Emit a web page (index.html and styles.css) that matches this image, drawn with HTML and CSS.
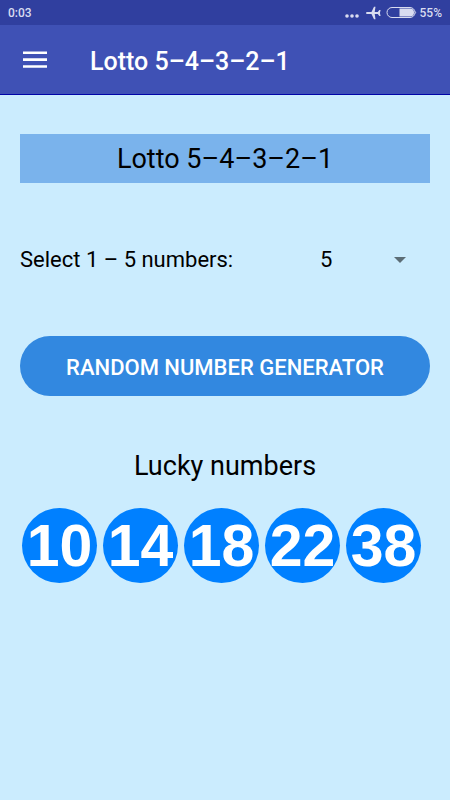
FILE: index.html
```html
<!DOCTYPE html>
<html lang="en">
<head>
<meta charset="utf-8">
<meta name="viewport" content="width=device-width, initial-scale=1">
<title>Lotto 5–4–3–2–1</title>
<link rel="stylesheet" href="styles.css">
</head>
<body>
<div class="status">
  <span class="clock">0:03</span>
  <svg class="dots" width="14" height="14" viewBox="0 0 14 14" aria-hidden="true"><circle cx="2" cy="10" r="1.8"/><circle cx="7" cy="10" r="1.8"/><circle cx="12" cy="10" r="1.8"/></svg>
  <svg class="plane" width="15" height="14" viewBox="0 0 15 14" aria-hidden="true"><path d="M0 7c0-.7.7-1 1.500-1H5.500L8 .7H9.500L8.700 6H11.800L13.300 4H14.600L13.900 7l.7 3H13.300L11.800 8H8.700l.8 5.300H8L5.500 8h-4C.7 8 0 7.700 0 7z"/></svg>
  <svg class="battery" width="31" height="13" viewBox="0 0 31 13" aria-hidden="true"><rect class="shell" x="1" y="1.500" width="28" height="10" rx="5"/><path d="M13.500 2.500H24a4 4 0 0 1 0 8H13.500z"/><path d="M29.500 5q1.500 1.500 0 3z"/></svg>
  <span>55%</span>
</div>
<header class="appbar">
  <button class="menu" type="button" aria-label="Menu">
    <svg width="24" height="18" viewBox="0 0 24 18" aria-hidden="true"><path d="M0 .5h24v2.600H0zM0 7.300h24v2.600H0zM0 14.200h24v2.600H0z"/></svg>
  </button>
  <h1 class="title">Lotto 5–4–3–2–1</h1>
</header>
<main class="content">
  <h2 class="banner">Lotto 5–4–3–2–1</h2>
  <div class="picker">
    <label for="count">Select 1 – 5 numbers:</label>
    <div class="select-box">
      <select id="count">
        <option>1</option><option>2</option><option>3</option><option>4</option><option selected>5</option>
      </select>
      <svg class="caret" width="12" height="6" viewBox="0 0 12 6" aria-hidden="true"><path d="M0 0h12L6 6z"/></svg>
    </div>
  </div>
  <button class="generate" type="button">RANDOM NUMBER GENERATOR</button>
  <h2 class="lucky">Lucky numbers</h2>
  <ul class="balls">
    <li>10</li><li>14</li><li>18</li><li>22</li><li>38</li>
  </ul>
</main>
</body>
</html>
```
FILE: styles.css
```css
* {
  box-sizing: border-box;
}

body {
  margin: 0;
  min-height: 100vh;
  background: #cbecfe;
  color: #000;
  font-family: Roboto, sans-serif;
}

.status {
  display: flex;
  align-items: center;
  height: 25px;
  padding: 0 8px;
  background: #303f9f;
  color: #d9dcf0;
  font-size: 12px;
  font-weight: 500;
}

.status svg {
  fill: #d9dcf0;
}

.clock {
  margin-right: auto;
}

.plane {
  margin-left: 7px;
}

.battery {
  margin: 0 3px 0 5px;
}

.status .shell {
  fill: none;
  stroke: #d9dcf0;
}

.appbar {
  display: flex;
  align-items: center;
  height: 70px;
  padding: 0 20px;
  background: #3f51b5;
  border-bottom: 1px solid #0004a8;
  color: #fff;
}

.menu {
  display: flex;
  padding: 3px;
  border: 0;
  background: none;
}

.menu svg {
  fill: #fff;
}

.title {
  margin: 4px 0 0 40px;
  font-size: 25px;
  font-weight: 500;
}

.content {
  padding: 39px 20px;
}

.banner {
  margin: 0;
  padding-top: 2px;
  background: #7ab3ec;
  font-size: 27px;
  font-weight: 400;
  line-height: 47px;
  text-align: center;
}

.picker {
  display: flex;
  align-items: center;
  justify-content: space-between;
  margin-top: 57px;
  font-size: 22px;
  line-height: 40px;
}

.select-box {
  position: relative;
  width: 110px;
}

.select-box select {
  width: 100%;
  height: 40px;
  padding: 0;
  border: 0;
  appearance: none;
  background: none;
  color: #000;
  font: inherit;
}

.caret {
  position: absolute;
  top: 17px;
  right: 24px;
  fill: #5c6d76;
  pointer-events: none;
}

.generate {
  width: 100%;
  height: 60px;
  margin-top: 56px;
  padding: 2px 0 0;
  border: 0;
  border-radius: 30px;
  background: #3288e0;
  color: #fff;
  font: 500 22px Roboto, sans-serif;
}

.lucky {
  margin: 50px 0 0;
  font-size: 27px;
  font-weight: 400;
  line-height: 40px;
  text-align: center;
}

.balls {
  display: flex;
  gap: 6px;
  margin: 22px 0 0;
  padding: 0 2px;
  list-style: none;
}

.balls li {
  display: flex;
  align-items: center;
  justify-content: center;
  width: 75px;
  height: 75px;
  border-radius: 50%;
  background: #0080ff;
  color: #fff;
  font: bold 59px "Liberation Sans", sans-serif;
}
```
